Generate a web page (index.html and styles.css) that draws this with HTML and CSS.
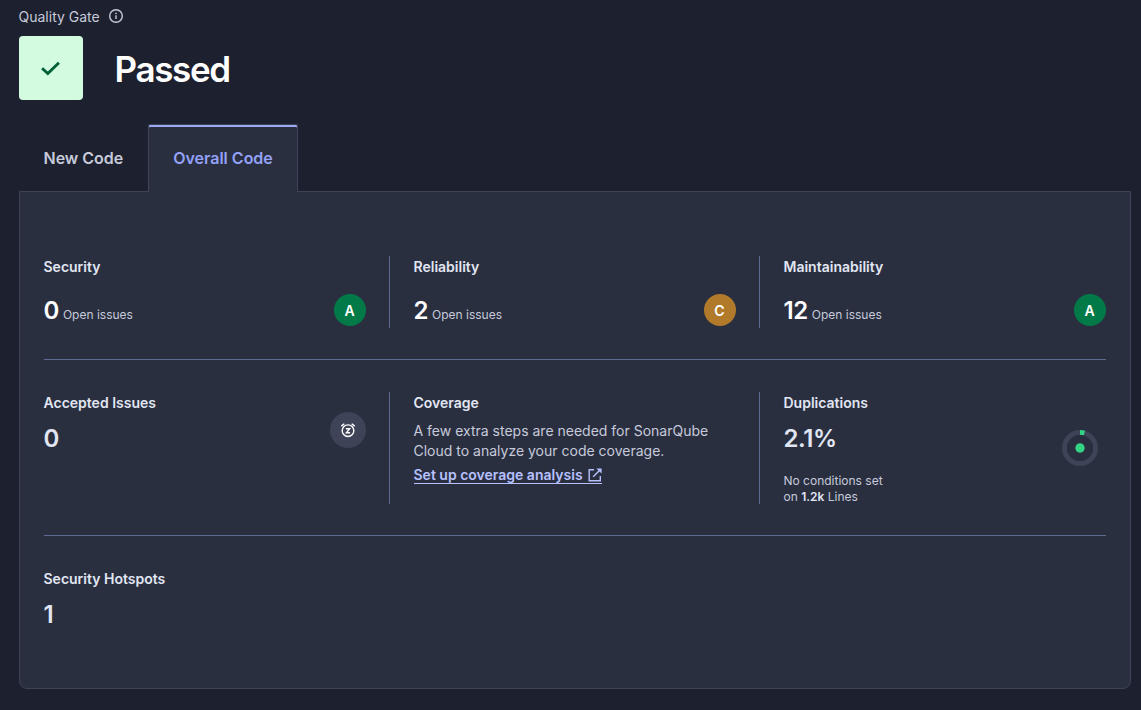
FILE: index.html
```html
<!DOCTYPE html>
<html lang="en">
<head>
<meta charset="utf-8">
<title>Quality Gate</title>
<link rel="stylesheet" href="styles.css">
</head>
<body>
<main class="page">
  <div class="gate-label">
    <span>Quality Gate</span>
    <svg class="info" viewBox="0 0 16 16" fill="none"><circle cx="8" cy="8" r="6.3" stroke="currentColor" stroke-width="1.4"/><path d="M8 7.2v3.9" stroke="currentColor" stroke-width="1.4"/><circle cx="8" cy="5.3" r=".85" fill="currentColor"/></svg>
  </div>
  <div class="gate">
    <div class="gate-badge">
      <svg viewBox="0 0 24 24" width="24" height="24" fill="none"><path d="M3.1 12.3 8.8 17.6 19.9 6.7" stroke="#00603a" stroke-width="2.9"/></svg>
    </div>
    <h1 class="gate-status">Passed</h1>
  </div>
  <nav class="tabs">
    <a class="tab">New Code</a>
    <a class="tab tab-active">Overall Code</a>
  </nav>
  <section class="panel">
    <div class="row row-first">
      <article class="cell">
        <h2 class="title">Security</h2>
        <div class="metric"><p class="issues"><strong class="count">0</strong>Open issues</p><span class="rating rating-a">A</span></div>
      </article>
      <article class="cell">
        <h2 class="title">Reliability</h2>
        <div class="metric"><p class="issues"><strong class="count">2</strong>Open issues</p><span class="rating rating-c">C</span></div>
      </article>
      <article class="cell">
        <h2 class="title">Maintainability</h2>
        <div class="metric"><p class="issues"><strong class="count">12</strong>Open issues</p><span class="rating rating-a">A</span></div>
      </article>
    </div>
    <div class="row row-second">
      <article class="cell cell-split">
        <div>
          <h2 class="title">Accepted Issues</h2>
          <p class="value">0</p>
        </div>
        <span class="snooze">
          <svg viewBox="0 0 16 16" width="16" height="16" fill="none" stroke="currentColor"><circle cx="8" cy="8.7" r="5.8" stroke-width="1.4"/><path d="M1.3 4.1 4.3 1.7M14.7 4.1 11.7 1.7" stroke-width="1.4"/><path d="M5.9 6.8H9.6L6.4 10.7H10.1" stroke-width="1.4"/></svg>
        </span>
      </article>
      <article class="cell">
        <h2 class="title">Coverage</h2>
        <p class="text">A few extra steps are needed for SonarQube Cloud to analyze your code coverage.</p>
        <a class="link">Set up coverage analysis<svg class="external" viewBox="0 0 14 14" width="14" height="14" fill="none" stroke="currentColor" stroke-width="1.4"><path d="M6 1.7H1.2V12.8H12.3V8"/><path d="M12.7 1.3 5.2 8.8"/><path d="M8.4.4H13.6V5.6Z" fill="currentColor" stroke="none"/></svg></a>
      </article>
      <article class="cell cell-split">
        <div>
          <h2 class="title">Duplications</h2>
          <p class="value">2.1%</p>
          <p class="note">No conditions set<br>on <b>1.2k</b> Lines</p>
        </div>
        <svg class="donut" viewBox="0 0 36 36" width="36" height="36" fill="none"><circle cx="18" cy="18" r="15.6" stroke="#3e4357" stroke-width="4.8"/><path d="M18 2.4A15.6 15.6 0 0 1 22.4 3.03" stroke="#32d583" stroke-width="4.8"/><circle cx="18" cy="18" r="4.7" fill="#32d583"/></svg>
      </article>
    </div>
    <div class="row row-third">
      <article class="cell">
        <h2 class="title">Security Hotspots</h2>
        <p class="value">1</p>
      </article>
    </div>
  </section>
</main>
</body>
</html>
```

FILE: styles.css
```css
* { box-sizing: border-box; }

body {
  margin: 0;
  background: #1d202e;
  color: #c6cada;
  font: 400 14px/20px Inter, "Liberation Sans", sans-serif;
}

h1, h2, p { margin: 0; }

.page {
  width: 1141px;
  height: 710px;
  padding: 7px 10px 0 19px;
  overflow: hidden;
}

.gate-label {
  display: flex;
  align-items: center;
  gap: 8px;
  height: 20px;
  margin-left: -0.5px;
}

.info { width: 16px; height: 16px; margin-top: -2px; }

.gate {
  display: flex;
  align-items: center;
  gap: 31.5px;
  margin-top: 9px;
}

.gate-badge {
  display: flex;
  align-items: center;
  justify-content: center;
  width: 64px;
  height: 64px;
  border-radius: 4px;
  background: #d3fbdf;
}

.gate-badge svg { margin-left: -1px; }

.gate-status {
  padding-top: 2px;
  color: #fff;
  font-size: 35px;
  font-weight: 600;
  line-height: 44px;
  letter-spacing: -1.35px;
}

.tabs {
  display: flex;
  height: 68px;
  margin-top: 24px;
}

.tab {
  padding: 21px 24px 0 23.5px;
  border: 1px solid transparent;
  border-bottom: 0;
  font-size: 16px;
  font-weight: 600;
  line-height: 24px;
}

.tab:first-child { width: 129px; padding-right: 0; }

.tab-active {
  position: relative;
  width: 150px;
  padding-left: 24.2px;
  border-color: #3e4357;
  border-radius: 2px 2px 0 0;
  background: #2a2f40;
  box-shadow: inset 0 2px #9da8f5;
  color: #93a2f8;
}

.panel {
  width: 1112px;
  height: 498px;
  margin-top: -1px;
  padding: 64px 24px 0;
  border: 1px solid #3e4357;
  border-radius: 0 0 8px 8px;
  background: #2a2f40;
}

.row {
  display: grid;
  grid-template-columns: 346px 370px 346px;
}

.row-first {
  height: 104px;
  padding-bottom: 31px;
  border-bottom: 1px solid #5d6b91;
}

.row-second {
  grid-template-rows: 112px;
  height: 176px;
  padding: 32px 0 31px;
  border-bottom: 1px solid #5d6b91;
}

.row-third { padding-top: 32px; }

.cell { padding: 1px 23px 0 23.5px; border-right: 1px solid #5d6b91; }
.cell:first-child { margin-left: -0.5px; padding-left: 0; }
.cell:last-child { padding-right: 0; border-right: 0; }

.title {
  color: #e1e6f3;
  font-size: 14px;
  font-weight: 600;
  line-height: 20px;
}

.metric {
  display: flex;
  align-items: flex-start;
  justify-content: space-between;
  height: 32px;
  margin-top: 17px;
}

.issues { margin-top: 1px; font-size: 12px; line-height: 32px; }

.count {
  margin-right: 4px;
  color: #fff;
  font-size: 24px;
  font-weight: 600;
  letter-spacing: -0.4px;
}

.rating {
  width: 32px;
  height: 32px;
  padding-right: 1px;
  border-radius: 50%;
  color: #fff;
  font-size: 14px;
  font-weight: 600;
  line-height: 33px;
  text-align: center;
}

.rating-a { background: #027a48; }
.rating-c { background: #b07a2a; }

.cell-split { display: flex; justify-content: space-between; }

.value {
  margin-top: 10px;
  color: #e1e6f3;
  font-size: 24px;
  font-weight: 600;
  line-height: 32px;
  letter-spacing: -0.4px;
}

.snooze {
  display: flex;
  align-items: center;
  justify-content: center;
  width: 36px;
  height: 36px;
  margin-top: 19px;
  border-radius: 50%;
  background: #3e4357;
  color: #fff;
}

.text { margin-top: 8px; }

.link {
  display: inline-flex;
  align-items: center;
  gap: 5.5px;
  height: 18px;
  margin-top: 5px;
  border-bottom: 1px solid #b7c1ff;
  color: #b7c1ff;
  font-weight: 600;
}

.note { margin-top: 18px; font-size: 12px; line-height: 16px; }
.note b { color: #e1e6f3; font-weight: 600; }

.donut { margin: 37px 8px 0 0; }
```
